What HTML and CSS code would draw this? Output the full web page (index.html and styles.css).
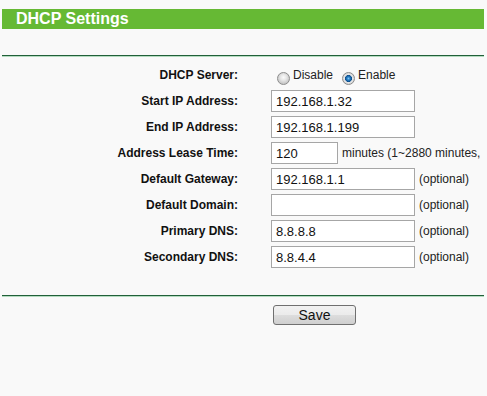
FILE: index.html
```html
<!DOCTYPE html>
<html lang="en">
  <head>
    <meta charset="UTF-8" />
    <title>DHCP Settings</title>
    <link rel="stylesheet" href="styles.css">
  </head>
  <body>
    <div class="page">
      <div class="title-bar">DHCP Settings</div>
      <div class="rule"></div>

      <div class="form">
        <div class="row">
          <label class="item">DHCP Server:</label>
          <div class="field radios">
            <label class="opt"><input type="radio" name="dhcp" value="0" /><span>Disable</span></label>
            <label class="opt"><input type="radio" name="dhcp" value="1" checked /><span>Enable</span></label>
          </div>
        </div>
        <div class="row">
          <label class="item">Start IP Address:</label>
          <div class="field"><input type="text" class="text" value="192.168.1.32" /></div>
        </div>
        <div class="row">
          <label class="item">End IP Address:</label>
          <div class="field"><input type="text" class="text" value="192.168.1.199" /></div>
        </div>
        <div class="row">
          <label class="item">Address Lease Time:</label>
          <div class="field">
            <input type="text" class="text short" value="120" />
            <span class="hint">minutes (1~2880 minutes,</span>
          </div>
        </div>
        <div class="row">
          <label class="item">Default Gateway:</label>
          <div class="field"><input type="text" class="text" value="192.168.1.1" /><span class="hint">(optional)</span></div>
        </div>
        <div class="row">
          <label class="item">Default Domain:</label>
          <div class="field"><input type="text" class="text" value="" /><span class="hint">(optional)</span></div>
        </div>
        <div class="row">
          <label class="item">Primary DNS:</label>
          <div class="field"><input type="text" class="text" value="8.8.8.8" /><span class="hint">(optional)</span></div>
        </div>
        <div class="row">
          <label class="item">Secondary DNS:</label>
          <div class="field"><input type="text" class="text" value="8.8.4.4" /><span class="hint">(optional)</span></div>
        </div>
      </div>

      <div class="rule bottom"></div>
      <div class="actions">
        <button type="button" class="btn">Save</button>
      </div>
    </div>
  </body>
</html>
```

FILE: styles.css
```css
html {
  overflow: hidden;
}
body {
  margin: 0;
  background-color: #f9f9f9;
  color: #111;
  font-family: "Liberation Sans", Arial, sans-serif;
  font-size: 12px;
}
.page {
  overflow: hidden;
}
.title-bar {
  margin: 9px 3px 0 2px;
  height: 20px;
  line-height: 20px;
  padding-left: 14px;
  background-color: #66b934;
  color: #ffffff;
  font-size: 16px;
  font-weight: bold;
}
.rule {
  margin: 26px 3px 0 2px;
  border-top: 1px solid #22603a;
  border-bottom: 1px solid #b4dcc0;
}
.rule.bottom {
  margin-top: 25px;
}
.form {
  padding-top: 5px;
}
.row {
  display: flex;
  align-items: center;
  height: 26px;
}
.item {
  flex: none;
  width: 238px;
  text-align: right;
  font-weight: bold;
  color: #111;
}
.field {
  display: flex;
  align-items: center;
  gap: 4px;
  margin-left: 33px;
  white-space: nowrap;
}
.text {
  box-sizing: border-box;
  width: 144px;
  height: 22px;
  margin: 0;
  padding: 0 4px;
  border: 1px solid #a6a6a6;
  background-color: #ffffff;
  color: #111;
  font-family: "Liberation Sans", Arial, sans-serif;
  font-size: 13px;
  outline: none;
}
.text.short {
  width: 67px;
}
.hint {
  color: #222;
}
.radios {
  gap: 0;
}
.opt {
  display: flex;
  align-items: center;
  margin-left: 9px;
}
.opt:first-child {
  margin-left: 6px;
}
.opt span {
  margin-left: 3px;
  font-size: 12px;
  color: #222;
}
.opt input {
  appearance: none;
  -webkit-appearance: none;
  box-sizing: border-box;
  width: 13px;
  height: 13px;
  margin: 7px 0 0 0;
  border: 1px solid #8c8c8c;
  border-radius: 50%;
  background: radial-gradient(circle at 50% 40%, #fbfbfb 0, #e6e6e6 3px, #c9c9c9 6px);
}
.opt input:checked {
  background: radial-gradient(circle at 50% 50%, #7cc4f2 0, #2a82c9 1.5px, #0e4f8c 3.2px, #e9e9e9 3.8px, #d0d0d0 6px);
}
.actions {
  padding: 8px 0 0 273px;
}
.btn {
  box-sizing: border-box;
  width: 83px;
  height: 20px;
  padding: 0;
  border: 1px solid #707070;
  border-radius: 3px;
  background: linear-gradient(#f2f2f2 0%, #ebebeb 50%, #dddddd 51%, #cfcfcf 100%);
  color: #111;
  font-family: "Liberation Sans", Arial, sans-serif;
  font-size: 14px;
}
```
